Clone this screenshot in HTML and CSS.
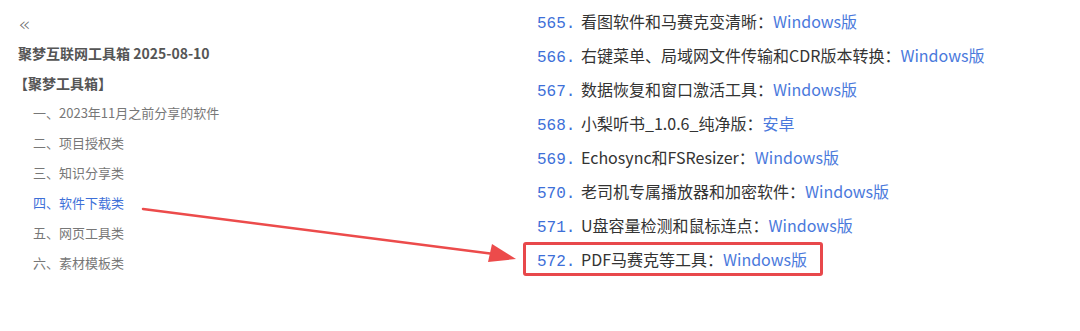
FILE: index.html
```html
<!DOCTYPE html>
<html>
<head>
    <title>聚梦互联网工具箱</title>
    <link rel="stylesheet" href="styles.css">
</head>
<body>
    <div class="page">
        <div class="sidebar">
            <div class="collapse">&laquo;</div>
            <div class="book-title">聚梦互联网工具箱 2025-08-10</div>
            <div class="group">【聚梦工具箱】</div>
            <ul class="toc">
                <li>一、2023年11月之前分享的软件</li>
                <li>二、项目授权类</li>
                <li>三、知识分享类</li>
                <li class="active">四、软件下载类</li>
                <li>五、网页工具类</li>
                <li>六、素材模板类</li>
            </ul>
        </div>

        <ol class="list">
            <li><span class="num">565.</span>看图软件和马赛克变清晰：<a>Windows版</a></li>
            <li><span class="num">566.</span>右键菜单、局域网文件传输和CDR版本转换：<a>Windows版</a></li>
            <li><span class="num">567.</span>数据恢复和窗口激活工具：<a>Windows版</a></li>
            <li><span class="num">568.</span>小梨听书_1.0.6_纯净版：<a>安卓</a></li>
            <li><span class="num">569.</span>Echosync和FSResizer：<a>Windows版</a></li>
            <li><span class="num">570.</span>老司机专属播放器和加密软件：<a>Windows版</a></li>
            <li><span class="num">571.</span>U盘容量检测和鼠标连点：<a>Windows版</a></li>
            <li class="marked"><span class="num">572.</span>PDF马赛克等工具：<a>Windows版</a></li>
        </ol>

        <!-- annotation arrow drawn over the page -->
        <svg class="arrow" width="1080" height="331" viewBox="0 0 1080 331">
            <line x1="143" y1="209" x2="494" y2="254" stroke="#ec4b4b" stroke-width="2.5" stroke-linecap="round"/>
            <polygon points="516,259 488,262 492,244" fill="#ec4b4b"/>
        </svg>
    </div>
</body>
</html>
```

FILE: styles.css
```css
body {
    margin: 0;
    padding: 0;
    background: #fff;
    font-family: "Noto Sans CJK SC", "Noto Sans", sans-serif;
}
.page {
    position: relative;
    display: flex;
    width: 1080px;
    height: 331px;
}
.sidebar {
    width: 523px;
    padding: 12px 0 0 18px;
    box-sizing: border-box;
    color: #555;
}
.collapse {
    font-size: 20px;
    line-height: 24px;
    height: 26px;
    color: #666;
    font-family: "DejaVu Sans", sans-serif;
    font-weight: 300;
}
.book-title {
    font-size: 14px;
    font-weight: bold;
    line-height: 30px;
    color: #555;
}
.group {
    font-size: 14px;
    font-weight: bold;
    line-height: 30px;
    margin-left: -4px;
    color: #555;
}
.toc {
    list-style: none;
    margin: 0;
    padding: 0 0 0 15px;
}
.toc li {
    font-size: 13px;
    line-height: 30px;
    color: #777;
}
.toc li.active {
    color: #3d6fd8;
}
.list {
    list-style: none;
    margin: 0;
    padding: 4px 0 0 0;
}
.list li {
    font-size: 16px;
    line-height: 24px;
    height: 24px;
    padding: 5px 0 5px 14px;
    color: #333;
    width: 282px;
    white-space: nowrap;
}
.list .num {
    display: inline-block;
    width: 44px;
    font-family: "Liberation Mono", monospace;
    font-size: 16px;
    color: #3d6fd8;
}
.list a {
    color: #4a79dc;
}
.list li.marked {
    border: 3px solid #e8484b;
    border-radius: 3px;
    padding: 2px 0 2px 11px;
    width: 283px;
}
.arrow {
    position: absolute;
    left: 0;
    top: 0;
    pointer-events: none;
}
```
